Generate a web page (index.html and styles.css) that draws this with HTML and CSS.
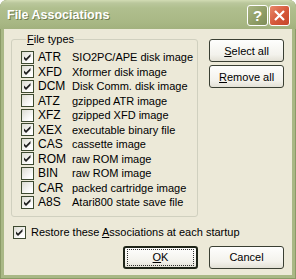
FILE: index.html
```html
<!DOCTYPE html>
<html lang="en">

<head>
    <meta charset="UTF-8">
    <title>File Associations</title>
    <link rel="stylesheet" href="styles.css">
</head>

<body>
    <div class="window">
        <div class="titlebar">
            <span class="title">File Associations</span>
            <div class="caption-buttons">
                <span class="cbtn help">?</span>
                <span class="cbtn close">
                    <svg width="13" height="13" viewBox="0 0 13 13"><path d="M2 2 L11 11 M11 2 L2 11" stroke="#fff" stroke-width="2.2" fill="none"/></svg>
                </span>
            </div>
        </div>

        <div class="client">
            <div class="top">
                <fieldset class="group">
                    <legend><u>F</u>ile types</legend>
                    <div class="row"><span class="cb on"></span><span class="ext">ATR</span><span class="desc">SIO2PC/APE disk image</span></div>
                    <div class="row"><span class="cb on"></span><span class="ext">XFD</span><span class="desc">Xformer disk image</span></div>
                    <div class="row"><span class="cb on"></span><span class="ext">DCM</span><span class="desc">Disk Comm. disk image</span></div>
                    <div class="row"><span class="cb"></span><span class="ext">ATZ</span><span class="desc">gzipped ATR image</span></div>
                    <div class="row"><span class="cb"></span><span class="ext">XFZ</span><span class="desc">gzipped XFD image</span></div>
                    <div class="row"><span class="cb on"></span><span class="ext">XEX</span><span class="desc">executable binary file</span></div>
                    <div class="row"><span class="cb on"></span><span class="ext">CAS</span><span class="desc">cassette image</span></div>
                    <div class="row"><span class="cb on"></span><span class="ext">ROM</span><span class="desc">raw ROM image</span></div>
                    <div class="row"><span class="cb"></span><span class="ext">BIN</span><span class="desc">raw ROM image</span></div>
                    <div class="row"><span class="cb"></span><span class="ext">CAR</span><span class="desc">packed cartridge image</span></div>
                    <div class="row"><span class="cb on"></span><span class="ext">A8S</span><span class="desc">Atari800 state save file</span></div>
                </fieldset>
                <div class="side-buttons">
                    <button class="btn"><u>S</u>elect all</button>
                    <button class="btn"><u>R</u>emove all</button>
                </div>
            </div>

            <div class="restore"><span class="cb on"></span><span>Restore these <u>A</u>ssociations at each startup</span></div>

            <div class="bottom-buttons">
                <button class="btn default"><span class="focus"><u>O</u>K</span></button>
                <button class="btn">Cancel</button>
            </div>
        </div>
    </div>
</body>

</html>
```

FILE: styles.css
```css
html, body {
    margin: 0;
    padding: 0;
    width: 296px;
    height: 279px;
    overflow: hidden;
    font-family: 'Liberation Sans', Arial, sans-serif;
    font-size: 11px;
    color: #000;
}

.window {
    width: 296px;
    height: 279px;
    box-sizing: border-box;
    display: flex;
    flex-direction: column;
    background: #a9b886;
    border-radius: 7px 7px 0 0;
    padding: 0 4px 4px 4px;
    box-shadow: inset 0 0 0 1px #8a9a67;
}

.titlebar {
    height: 29px;
    display: flex;
    align-items: center;
    justify-content: space-between;
    margin: 0 -4px;
    padding: 0 6px 0 7px;
    border-radius: 7px 7px 0 0;
    background: linear-gradient(#d2dcb4 0, #bac79c 3px, #b0bf8e 8px, #a9b885 22px, #a2b17e 29px);
}

.title {
    color: #fff;
    font-weight: 700;
    font-size: 12.5px;
    text-shadow: 1px 1px 0 #6f7d4e;
    margin-top: 1px;
}

.caption-buttons {
    display: flex;
    gap: 1px;
    margin-top: 2px;
}

.cbtn {
    width: 21px;
    height: 21px;
    box-sizing: border-box;
    border: 1px solid #fff;
    border-radius: 3px;
    display: flex;
    align-items: center;
    justify-content: center;
    color: #fff;
}

.help {
    background: linear-gradient(135deg, #a8b482, #8e9c65 60%, #7f8d58);
    font-weight: 700;
    font-size: 15px;
}

.close {
    background: linear-gradient(135deg, #e8896a, #d5573a 55%, #c5462a);
}

.client {
    flex: 1;
    background: #ece9d8;
    padding: 0 8px 0 7px;
    display: flex;
    flex-direction: column;
}

.top {
    display: flex;
    gap: 11px;
    margin-top: 4px;
}

.group {
    width: 188px;
    box-sizing: border-box;
    margin: 0;
    padding: 4px 4px 6px 9px;
    border: 1px solid #d0d0bf;
    border-radius: 3px;
}

.group legend {
    padding: 0 1px;
    margin-left: 5px;
    line-height: 13px;
}

.row {
    height: 14.5px;
    display: flex;
    align-items: center;
}

.cb {
    width: 13px;
    height: 13px;
    box-sizing: border-box;
    border: 1px solid #3d4a30;
    background: linear-gradient(135deg, #dcdcd2, #fff 80%);
    flex: none;
}

.cb.on {
    background: url("data:image/svg+xml,%3Csvg xmlns='http://www.w3.org/2000/svg' width='11' height='11'%3E%3Cpath d='M2 4.5 L4 6.5 L8.5 2 L8.5 4.5 L4 9 L2 7 Z' fill='%23202020'/%3E%3C/svg%3E") no-repeat, linear-gradient(135deg, #dcdcd2, #fff 80%);
}

.ext {
    margin-left: 4px;
    width: 34px;
    font-size: 12px;
}

.desc {
    white-space: nowrap;
}

.side-buttons {
    display: flex;
    flex-direction: column;
    gap: 3px;
    margin-top: 6px;
}

.btn {
    width: 75px;
    height: 23px;
    box-sizing: border-box;
    border: 1px solid #3a3f33;
    border-radius: 3px;
    background: linear-gradient(#fefefd, #f3f2ec 70%, #e3e1d6);
    font-family: inherit;
    font-size: 11px;
    color: #000;
    padding: 0;
}

.restore {
    display: flex;
    align-items: center;
    gap: 5px;
    margin: 9px 0 0 2px;
}

.bottom-buttons {
    display: flex;
    justify-content: flex-end;
    gap: 11px;
    margin-top: 7px;
}

.btn.default {
    border: 2px solid #1e2418;
    display: flex;
    align-items: center;
    justify-content: center;
}

.focus {
    display: block;
    width: 65px;
    height: 15px;
    line-height: 15px;
    border: 1px dotted #333;
}
```
